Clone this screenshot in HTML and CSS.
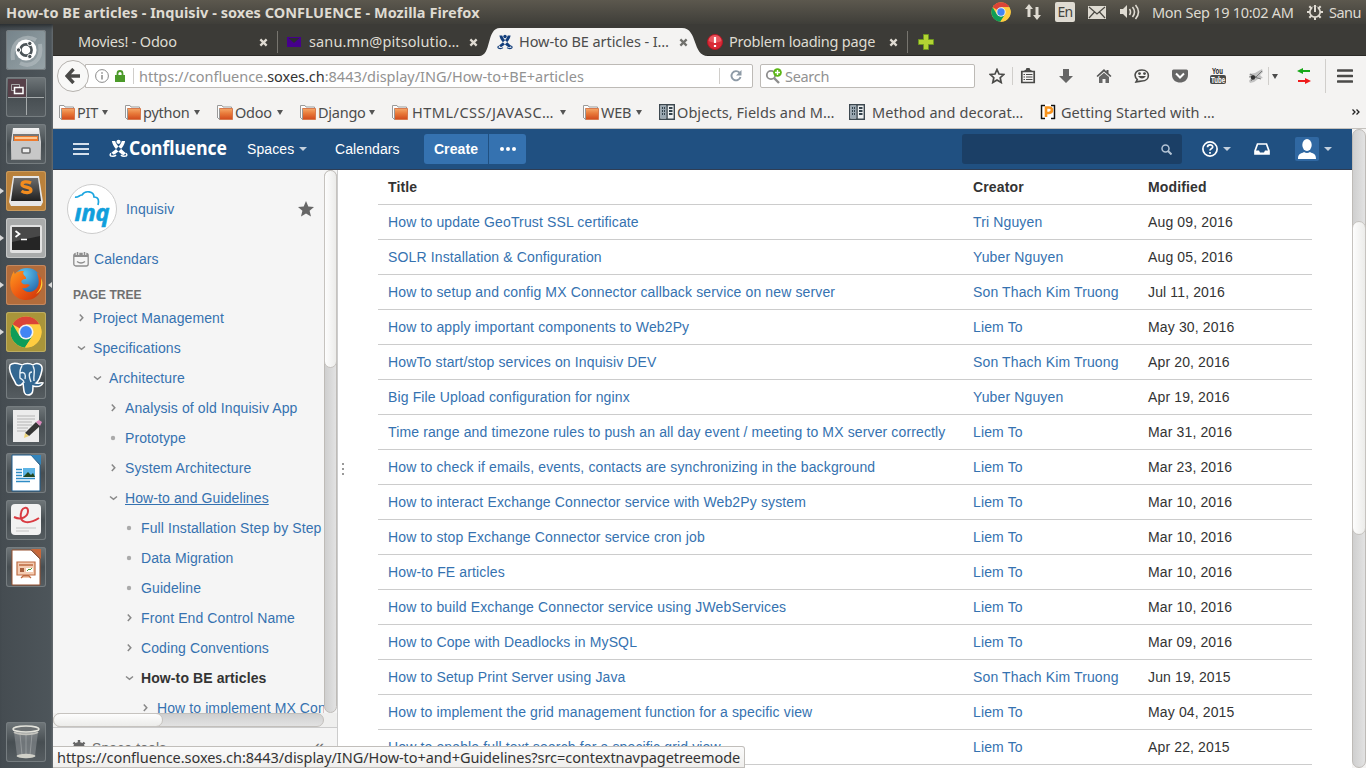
FILE: index.html
```html
<!DOCTYPE html>
<html lang="en">
<head>
<meta charset="utf-8">
<title>How-to BE articles - Inquisiv - soxes CONFLUENCE</title>
<link rel="stylesheet" href="styles.css">
</head>
<body>
<svg class="defs" width="0" height="0" aria-hidden="true">
  <defs>
    <linearGradient id="orange" x1="0" y1="0" x2="0" y2="1"><stop offset="0" stop-color="#f6a868"/><stop offset=".45" stop-color="#e87a3a"/><stop offset="1" stop-color="#d24a1c"/></linearGradient>
    <linearGradient id="steel" x1="0" y1="0" x2="0" y2="1"><stop offset="0" stop-color="#f3f3f3"/><stop offset="1" stop-color="#a9a9a9"/></linearGradient>
    <linearGradient id="fox" x1="0" y1="0" x2="1" y2="1"><stop offset="0" stop-color="#ff9a1f"/><stop offset=".5" stop-color="#ee5a12"/><stop offset="1" stop-color="#c8320a"/></linearGradient>
    <radialGradient id="globe" cx=".4" cy=".2" r=".9"><stop offset="0" stop-color="#5cc4f0"/><stop offset="1" stop-color="#174a92"/></radialGradient>
    <linearGradient id="dark" x1="0" y1="0" x2="0" y2="1"><stop offset="0" stop-color="#6c6c6c"/><stop offset="1" stop-color="#202020"/></linearGradient>
    <symbol id="folder" viewBox="0 0 16 15"><path d="M.5 13V.5H5L6 2h8.500v3" fill="#fdfdfd" stroke="#9a9a9a"/><path d="M2.500 3.500h13v11h-13z" fill="url(#orange)" stroke="#d77a4e"/><path d="M.5 12.500l2 2V4" fill="none" stroke="#999"/></symbol>
    <symbol id="chrome" viewBox="0 0 32 32"><circle cx="16" cy="16" r="15.500" fill="#ffcd40"/><path d="M16 16 2.600 8.200A15.500 15.500 0 0 1 29.500 8.500H16z" fill="#db4437"/><path d="M2.600 8.200A15.500 15.500 0 0 0 15 31.500L22.500 20 16 16 9.500 19.800z" fill="#0f9d58"/><path d="M15 31.500 22.500 20 23 12 16 8.500H29.500A15.500 15.500 0 0 1 15 31.500z" fill="#ffcd40"/><circle cx="16" cy="16" r="7.500" fill="#f1f1f1"/><circle cx="16" cy="16" r="5.900" fill="#4285f4"/></symbol>
    <symbol id="x" viewBox="0 0 10 10"><path d="M1.500 1.500l7 7M8.500 1.500l-7 7" stroke="currentColor" stroke-width="2.500"/></symbol>
    <symbol id="caret" viewBox="0 0 8 5" preserveAspectRatio="none"><path d="M0 0h8L4 5z" fill="currentColor"/></symbol>
    <symbol id="mark" viewBox="0 0 20 20"><path d="M3 2h3.500c1.500 5 6 8 11.500 13l-3 2C9 13 4 8 3 2zM17 2h-3.500C12 7 8 10 2.500 14.500l2.500 2C11 13 16 8 17 2z" fill="currentColor"/><circle cx="10" cy="3" r="2.200" fill="currentColor"/><path d="M2 15c-3 3.500 3 4 5.500 2M18 15c3 3.500-3 4-5.500 2" fill="none" stroke="currentColor" stroke-width="1.500"/></symbol>
    <symbol id="book" viewBox="0 0 16 16"><path d="M.7.700h14.600v14.600H.7z" fill="#eef0f1" stroke="#3d4850" stroke-width="1.400"/><path d="M1.400 1.400H7v13.200H1.400z" fill="#9aa7b1"/><path d="M8 1v14" stroke="#3d4850" stroke-width="1.500"/><path d="M3 4h1M5 4h1M3 7h1M5 7h1M3 10h1M5 10h1M10 4h3.500M10 7h3.500M10 10h3.500" stroke="#33424c" stroke-width="1.800"/></symbol>
    <symbol id="right" viewBox="0 0 10 10"><path d="M3.800 1.500 6.800 4.700 3.800 8" fill="none" stroke="#888" stroke-width="1.500"/></symbol>
    <symbol id="down" viewBox="0 0 10 10"><path d="M2 3.500 5.500 6.300 9 3.500" fill="none" stroke="#888" stroke-width="1.500"/></symbol>
    <symbol id="dot" viewBox="0 0 10 10"><circle cx="5" cy="5" r="2.200" fill="#aaa"/></symbol>
  </defs>
</svg>

<header class="panel">
  <span class="window-title">How-to BE articles - Inquisiv - soxes CONFLUENCE - Mozilla Firefox</span>
  <div class="indicators">
    <svg class="i-chrome"><use href="#chrome"/></svg>
    <svg class="i-net" viewBox="0 0 18 18"><path d="M5 1 9 6H6.500v8h-3V6H1zM13 17l-4-5h2.500V4h3v8H17z" fill="#dfdbd2"/></svg>
    <span class="lang">En</span>
    <svg class="i-mail" viewBox="0 0 18 13"><path d="M0 0h18v13H0z" fill="#dfdbd2"/><path d="M1 1l8 7 8-7M1 12l5.500-6M17 12l-5.500-6" fill="none" stroke="#4a4842" stroke-width="1.200"/></svg>
    <svg class="i-sound" viewBox="0 0 20 18"><path d="M0 6h3l4-4v13l-4-4H0z" fill="#dfdbd2"/><path d="M9.500 6q2 3 0 6M12.500 4q4 5 0 10M15.500 2q6 7 0 14" fill="none" stroke="#dfdbd2" stroke-width="1.600"/></svg>
    <span class="clock">Mon Sep 19 10:02 AM</span>
    <svg class="i-gear" viewBox="0 0 18 18"><circle cx="9" cy="9" r="5.200" fill="none" stroke="#dfdbd2" stroke-width="1.700"/><path d="M9 3.500V9" stroke="#45433e" stroke-width="5"/><path d="M9 2v7M1 9h3M14 9h3M3.300 3.300l2 2M14.700 3.300l-2 2M3.300 14.700l2-2M14.700 14.700l-2-2M9 14.500V17" stroke="#dfdbd2" stroke-width="2"/></svg>
    <span class="user">Sanu</span>
  </div>
</header>

<div class="desktop">
  <nav class="launcher">
    <div class="tile ubuntu"><svg viewBox="0 0 40 40"><path d="M7 30C4 10 20 4 30 10M34 14c3 18-10 24-20 19" fill="none" stroke="#b5bec1" stroke-width="4" opacity=".6"/><circle cx="20" cy="20" r="10.500" fill="#fff"/><circle cx="20" cy="20" r="5.600" fill="none" stroke="#4b5357" stroke-width="2.600"/><g fill="#4b5357" stroke="#fff"><circle cx="12.500" cy="20" r="2.200"/><circle cx="23.800" cy="13.500" r="2.200"/><circle cx="23.800" cy="26.500" r="2.200"/></g></svg></div>
    <div class="tile"><svg viewBox="0 0 40 40"><path d="M2 2h18v18H2z" fill="#574049"/><path d="M20.500 2v36M2 20.500h36" stroke="#a6abac"/><path d="M5.500 7.500h8v6h-8z" fill="none" stroke="#aaa"/><path d="M8.500 10.500h8.500v6H8.500z" fill="#574049" stroke="#fff" stroke-width="1.500"/></svg></div>
    <div class="tile"><svg viewBox="0 0 40 40"><path d="M7 4h26l2 14v18H5V18z" fill="url(#steel)"/><path d="M7 10h26v7H7z" fill="#777"/><path d="M8 12h24v5H8z" fill="#ef7b2d"/><path d="M9 14h22" stroke="#ffe0b5" stroke-width="1.500"/><path d="M6 17h28v18H6z" fill="#c8c8c8"/><rect x="16" y="24" width="8" height="5" rx="1" fill="#eee" stroke="#6b6b6b" stroke-width="1.600"/></svg></div>
    <div class="tile amber run"><svg viewBox="0 0 40 40"><path d="M7 5h26l4 26-2 4H5l-2-4z" fill="#e7e7e7"/><path d="M8 7h24l3 23H5z" fill="url(#dark)"/><path d="M25 12c-4-2-9-1.500-9 1.500 0 3.500 9 1.800 9 5.500 0 3.200-6 3.300-9.500 1" fill="none" stroke="#f28c1e" stroke-width="3.200"/></svg></div>
    <div class="tile light run"><svg viewBox="0 0 40 40"><rect x="4" y="7" width="32" height="28" rx="2" fill="#e2e2e2"/><path d="M6 9h28v23H6z" fill="#252525"/><path d="M6 9h28v9L6 24z" fill="#484848"/><path d="M9.500 13l4 3-4 3M15 21.500h6" fill="none" stroke="#fff" stroke-width="1.700"/></svg></div>
    <div class="tile rust run active"><svg viewBox="0 0 40 40"><circle cx="21" cy="18" r="15" fill="url(#globe)"/><path d="M8 6C2 15 3 28 12 33s23 1 24-13c1-6-3-12-5-12 2 5 3 12-1 16-5 5-12 3-14-1 4 1 6-1 8-3-3-2-5 1-8-2-2-2 1-4 4-4 1-3-5-4-2-8-4 0-7 0-9 3-1-1-1-2-1-3z" fill="url(#fox)"/><path d="M35 13c1 7-1 12-5 16 6-3 8-10 5-16z" fill="#ffd435"/></svg></div>
    <div class="tile gold run"><svg viewBox="0 0 40 40"><use href="#chrome" x="4" y="4" width="32" height="32"/></svg></div>
    <div class="tile"><svg viewBox="0 0 40 40"><path d="M4 6c4-4 9-1 12 0 3-2 8-2 11 0 4-3 10-1 9 5-1 5-3 11-6 13 3 1 5-1 7 0-2 4-6 4-10 3 0 5 0 9-5 9s-4-6-5-12c-3 4-7 3-8-1C6 18 2 11 4 6z" fill="#336791" stroke="#fff" stroke-width="1.500"/><path d="M16 7c-3 4-2 8-2 12 2 2 4 1 4 5M27 7c3 5 0 9 1 15M14 14c5-2 6 2 5 6M26 13c-4 0-3 5-1 10" fill="none" stroke="#e8f1f7" stroke-width="1.400"/></svg></div>
    <div class="tile"><svg viewBox="0 0 40 40"><path d="M7 4h26v32H7z" fill="#ececec"/><path d="M11 10h18M11 13h18M11 16h15M11 19h15M11 22h11M11 25h9" stroke="#b4b4b4"/><path d="M19 27 30 16l4 4-11 10z" fill="#353535"/><path d="M30 16l3-2 3 2-2 4z" fill="#dc89bd"/><path d="M19 27l4 3-5 2z" fill="#ead276"/></svg></div>
    <div class="tile"><svg viewBox="0 0 40 40"><path d="M6 2h19l9 10v26H6z" fill="#fff" stroke="#1c5c8e"/><path d="M25 2h10v10z" fill="#3485bb"/><path d="M10 16.500h6M10 19.500h6M10 22.500h6M10 25.500h19M10 28.500h14" stroke="#2f8cc5" stroke-width="1.700"/><path d="M17 15h12v9H17z" fill="#5db4e5"/><path d="M17 24l5-5 3 3 2-2 2 4z" fill="#244821"/></svg></div>
    <div class="tile"><svg viewBox="0 0 40 40"><rect x="5" y="4" width="30" height="31" rx="4" fill="#f2f2f2"/><path d="M8 17c8 4 14-1 14-6 0-5-6-4-7 2-2 10 7 12 18 5" fill="none" stroke="#d93b42" stroke-width="2"/><path d="M10 28h20M10 31h13" stroke="#c4c4c4"/></svg></div>
    <div class="tile"><svg viewBox="0 0 40 40"><path d="M6 3h19l9 9v26H6z" fill="#fff" stroke="#97502f"/><path d="M25 2h10v10z" fill="#c9683a"/><path d="M11 15h18v13H11zM15 31l2-2h6l2 2" fill="#f4ccb2" stroke="#bd6a40" stroke-width="1.200"/><path d="M13 18h14" stroke="#bd6a40" stroke-width="1.500"/><path d="M14 21h4v4h-4z" fill="#a7603f"/><path d="M20 21h7v4h-7z" fill="#fff"/><path d="M21 24l2-2 1 1 2-2" fill="none" stroke="#4a9b3a"/></svg></div>
    <div class="tile trash"><svg viewBox="0 0 40 40"><path d="M8 10l3 24c1 3 17 3 18 0l3-24z" fill="#b9bebf" opacity=".35"/><path d="M14 12l2 21M20 12v22M26 12l-2 21" stroke="#c8caca" stroke-width=".4"/><ellipse cx="20" cy="7" rx="13" ry="3" fill="#6d7274" stroke="#e4e4dc" stroke-width="1.600"/><path d="M8 10c4 3 20 3 24 0" fill="none" stroke="#c3c3bd" stroke-width="2"/><ellipse cx="20" cy="34" rx="9.500" ry="2.200" fill="#d0d0c8"/></svg></div>
  </nav>

  <main class="browser">
    <div class="tabs">
      <div class="tab t1"><span>Movies! - Odoo</span><svg class="close"><use href="#x"/></svg></div>
      <div class="tab t2"><svg class="fav-mail" viewBox="0 0 14 10"><path d="M0 0h14v10H0z" fill="#46008c"/><path d="M1.500 1 7 6l5.500-5" fill="#2c2c30"/></svg><span>sanu.mn@pitsolutio…</span><svg class="close"><use href="#x"/></svg></div>
      <div class="tab t3">
        <svg class="tab-shape" viewBox="0 0 230 28"><path d="M0 28C13 28 7 0 21 0H203C219 0 213 28 229 28z" fill="#f4f3f2"/></svg>
        <svg class="fav"><use href="#mark"/></svg><span>How-to BE articles - I…</span><svg class="close"><use href="#x"/></svg></div>
      <div class="tab t4"><svg class="fav" viewBox="0 0 16 16"><circle cx="8" cy="8" r="7.500" fill="#d92b38" stroke="#b51724"/><path d="M1.500 7a6.500 6 0 0 1 13 0q-6 3-13 0z" fill="#ee6b71" opacity=".7"/><path d="M8 3v6M8 11v2" stroke="#fff" stroke-width="2.200"/></svg><span>Problem loading page</span><svg class="close"><use href="#x"/></svg></div>
      <svg class="plus" viewBox="0 0 16 16"><path d="M5.500.5h5v5h5v5h-5v5h-5v-5h-5v-5h5z" fill="#b4d433" stroke="#6e9620"/></svg>
    </div>

    <div class="navbar">
      <div class="back"><svg viewBox="0 0 16 16"><path d="M8.500 1 2 8l6.500 7M2.500 8H15" fill="none" stroke="#4a4a48" stroke-width="3.400"/></svg></div>
      <div class="url">
        <svg class="info" viewBox="0 0 14 14"><circle cx="7" cy="7" r="6.400" fill="none" stroke="#8a8a8a"/><path d="M7 6v4.500M7 3.200v1.600" stroke="#8a8a8a" stroke-width="1.500"/></svg>
        <svg class="lock" viewBox="0 0 10 12"><path d="M2.500 6V3.500a2.500 2.500 0 0 1 5 0V6" fill="none" stroke="#4c9a2a" stroke-width="1.800"/><path d="M0 5h10v7H0z" fill="#4c9a2a"/></svg>
        <i class="rule"></i>
        <span class="address">https://confluence.<b>soxes.ch</b>:8443/display/ING/How-to+BE+articles</span>
        <i class="rule end"></i>
        <svg class="reload" viewBox="0 0 12 12"><path d="M9.500 2.700A4.600 4.600 0 1 0 10.500 7" fill="none" stroke="#8d9aa6" stroke-width="1.900"/><path d="M11.500 0v5.500H6z" fill="#8d9aa6"/></svg>
      </div>
      <div class="search"><svg viewBox="0 0 18 16"><circle cx="6" cy="7" r="4.200" fill="none" stroke="#8e8e8e" stroke-width="1.800"/><path d="M9 10l5 5" stroke="#8e8e8e" stroke-width="2.400"/><circle cx="12.500" cy="4.500" r="4.300" fill="#5cb615"/><path d="M10 4.500h5M12.500 2v5" stroke="#fff" stroke-width="1.400"/></svg><span>Search</span></div>
      <div class="tools">
        <svg class="w16" viewBox="0 0 16 16"><path d="M8 1.500l2 4.500 4.800.5-3.600 3.200 1 4.800L8 12l-4.200 2.500 1-4.800L1.200 6.500 6 6z" fill="none" stroke="#4a4a48" stroke-width="1.700"/></svg>
        <i class="rule"></i>
        <svg class="w16 clip" viewBox="0 0 16 16"><path d="M1.800 3.500h12.400v11H1.800z" fill="#f4f3f2" stroke="#4a4a48" stroke-width="1.700"/><path d="M3 3.500 6 1.500a2 2 0 0 1 4 0l3 2z" fill="#4a4a48"/><path d="M3.500 6.500h1.500M6 6.500h6.500M3.500 9h1.500M6 9h6.500M3.500 11.500h1.500M6 11.500h6.500" stroke="#4a4a48" stroke-width="1.100"/></svg>
        <svg class="w16 g1" viewBox="0 0 16 16"><path d="M5 1h6v7h4l-7 7-7-7h4z" fill="#666"/></svg>
        <svg class="w16 g2" viewBox="0 0 16 16"><path d="M8 1 .5 8l1.200 1L8 3.500 14.300 9l1.200-1-3-2.800V2h-2v1.500z" fill="#555"/><path d="M3 9l5-4.200L13 9v6H9.500v-4h-3v4H3z" fill="#666"/></svg>
        <svg class="w16 g3" viewBox="0 0 16 16"><path d="M8 2c8.500 0 8.500 11 0 11-2 0-2.500.5-6 1l1.300-2.500C-.5 8 .5 2 8 2z" fill="none" stroke="#4a4a48" stroke-width="1.600"/><path d="M4 8q4 5 8 0z" fill="#4a4a48"/><circle cx="5.500" cy="5.600" r="1.400" fill="#4a4a48"/><circle cx="10.500" cy="5.600" r="1.400" fill="#4a4a48"/></svg>
        <svg class="w16 g4" viewBox="0 0 16 16"><path d="M1.500 1.500h13q1.500 0 1.500 1.500v4c0 10-16 10-16 0V3q0-1.500 1.500-1.500z" fill="#666"/><path d="M4 5.500l4 4 4-4" fill="none" stroke="#fff" stroke-width="2"/></svg>
        <svg class="w16 g5" viewBox="0 0 16 18"><rect y="8" width="16" height="9" rx="2" fill="#4a4a48"/><text x="2" y="7" textLength="11" lengthAdjust="spacingAndGlyphs" class="yt">You</text><text x="1" y="15.500" textLength="14" lengthAdjust="spacingAndGlyphs" class="yt inv">Tube</text></svg>
        <svg class="w16 g6" viewBox="0 0 16 16"><path d="M1 6l6-1 7-4 1 3-3 3 3 3-5 1-4 3-4 1-1-2 2-3z" fill="#c2c2c2"/><path d="M2 6l6 3 6-6M3 13l3-4 7 2M1 9l5-1" fill="none" stroke="#777"/><circle cx="5" cy="9.500" r="2.200" fill="#333"/></svg>
        <i class="rule"></i>
        <svg class="tri"><use href="#caret"/></svg>
        <svg class="w14 g7" viewBox="0 0 14 16"><path d="M5 3h8" stroke="#18a818" stroke-width="2"/><path d="M6 0v6L0 3z" fill="#18a818"/><path d="M1 13h8" stroke="#ee1c1c" stroke-width="2"/><path d="M8 10v6l6-3z" fill="#ee1c1c"/></svg>
        <i class="rule tall"></i>
        <svg class="w16 g8" viewBox="0 0 16 14"><path d="M1 1.500h14M1 7h14M1 12.500h14" stroke="#4a4a48" stroke-width="2.600" stroke-linecap="round"/></svg>
      </div>
    </div>

    <div class="bookmarks">
      <div class="bm b1"><svg><use href="#folder"/></svg><span>PIT</span><svg class="tri"><use href="#caret"/></svg></div>
      <div class="bm b2"><svg><use href="#folder"/></svg><span>python</span><svg class="tri"><use href="#caret"/></svg></div>
      <div class="bm b3"><svg><use href="#folder"/></svg><span>Odoo</span><svg class="tri"><use href="#caret"/></svg></div>
      <div class="bm b4"><svg><use href="#folder"/></svg><span>Django</span><svg class="tri"><use href="#caret"/></svg></div>
      <div class="bm b5"><svg><use href="#folder"/></svg><span>HTML/CSS/JAVASC…</span><svg class="tri"><use href="#caret"/></svg></div>
      <div class="bm b6"><svg><use href="#folder"/></svg><span>WEB</span><svg class="tri"><use href="#caret"/></svg></div>
      <div class="bm b7"><svg><use href="#book"/></svg><span>Objects, Fields and M…</span></div>
      <div class="bm b8"><svg><use href="#book"/></svg><span>Method and decorat…</span></div>
      <div class="bm b9"><svg viewBox="0 0 16 16"><path d="M0 0h16v16H0z" fill="#fff"/><path d="M5 1.500H1.500v13H5M11 1.500h3.500v13H11" fill="none" stroke="#111" stroke-width="1.500"/><path d="M6 13V3.500h3q3 0 3 2.600T9 9H6" fill="none" stroke="#f7931e" stroke-width="2.600"/></svg><span>Getting Started with …</span></div>
      <svg class="more" viewBox="0 0 8 6"><path d="M.5.500 3 3 .5 5.500M4.500.500 7 3 4.500 5.500" fill="none" stroke="#222" stroke-width="1.300"/></svg>
    </div>

    <div class="viewport">
      <div class="page">
        <header class="conf">
          <svg class="burger" viewBox="0 0 16 12"><path d="M0 1h16M0 6h16M0 11h16" stroke="#d5e0ec" stroke-width="2"/></svg>
          <svg class="logo" viewBox="0 0 120 24"><use href="#mark" x="1" y="2" width="19" height="19"/><text x="21" y="18" textLength="98" lengthAdjust="spacingAndGlyphs">Confluence</text></svg>
          <span class="spaces">Spaces</span><svg class="tri sp"><use href="#caret"/></svg>
          <span class="cal">Calendars</span>
          <b class="create">Create</b><span class="dots"><svg viewBox="0 0 16 4"><circle cx="2" cy="2" r="2"/><circle cx="8" cy="2" r="2"/><circle cx="14" cy="2" r="2"/></svg></span>
          <div class="right">
            <div class="quick"><svg viewBox="0 0 11 11"><circle cx="4.500" cy="4.500" r="3.500" fill="none" stroke="#b4c4d5" stroke-width="1.500"/><path d="M7 7l3.500 3.500" stroke="#b4c4d5" stroke-width="2"/></svg></div>
            <svg class="help" viewBox="0 0 16 16"><circle cx="8" cy="8" r="7.100" fill="none" stroke="#fff" stroke-width="1.700"/><path d="M5.500 6.200c0-3.200 5.200-3 5.200-.3C10.700 7.700 8 7.600 8 9.600M8 11v1.800" fill="none" stroke="#fff" stroke-width="1.700"/></svg>
            <svg class="tri"><use href="#caret"/></svg>
            <svg class="tray" viewBox="0 0 16 12"><path d="M3.500 1h9L15 8v3H1V8z" fill="none" stroke="#fff" stroke-width="1.700"/><path d="M1 7.500h4l1 2h4l1-2h4V11H1z" fill="#fff"/></svg>
            <svg class="avatar" viewBox="0 0 24 24"><rect width="24" height="24" rx="2" fill="#3068a2"/><ellipse cx="12" cy="8" rx="4.700" ry="6" fill="#fff"/><path d="M3 22c0-6 3-5 6-7q3 2 6 0c3 2 6 1 6 7z" fill="#fff"/></svg>
            <svg class="tri"><use href="#caret"/></svg>
          </div>
        </header>
        <div class="body">
          <aside class="side">
            <div class="scroller">
              <div class="side-content">
                <div class="space"><svg class="inq" viewBox="0 0 50 50"><circle cx="25" cy="25" r="24.500" fill="#fff" stroke="#ccc"/><path d="M8 13c3 1 4-2 7-2 3-5 12-4 12 2 5 0 5 4 4 8" fill="none" stroke="#1ba5e0" stroke-width="1.700"/><text x="7.500" y="37" textLength="35" lengthAdjust="spacingAndGlyphs">ınq</text></svg><a>Inquisiv</a><svg class="star" viewBox="0 0 16 16"><path d="M8 0l2.300 5.500L16 6l-4.400 3.700L13 15.500 8 12.400l-5 3.100 1.400-5.800L0 6l5.700-.5z" fill="#666"/></svg></div>
                <div class="calrow"><svg viewBox="0 0 16 16"><rect x=".8" y="2.500" width="14.400" height="12.500" rx="2" fill="none" stroke="#8d8d8d" stroke-width="1.300"/><path d="M1 3h14v3H1z" fill="#8d8d8d"/><path d="M4.500 0v4M11.500 0v4" stroke="#f5f5f5" stroke-width="3.500"/><path d="M4.500 1v3M11.500 1v3" stroke="#8d8d8d" stroke-width="1.500"/><path d="M4 10.500q4 3 8 0" fill="none" stroke="#8d8d8d" stroke-width="1.300"/></svg><a>Calendars</a></div>
                <h5>PAGE TREE</h5>
                <ul class="tree">
                  <li class="l1"><svg><use href="#right"/></svg><a>Project Management</a></li>
                  <li class="l1"><svg><use href="#down"/></svg><a>Specifications</a></li>
                  <li class="l2"><svg><use href="#down"/></svg><a>Architecture</a></li>
                  <li class="l3"><svg><use href="#right"/></svg><a>Analysis of old Inquisiv App</a></li>
                  <li class="l3"><svg><use href="#dot"/></svg><a>Prototype</a></li>
                  <li class="l3"><svg><use href="#right"/></svg><a>System Architecture</a></li>
                  <li class="l3"><svg><use href="#down"/></svg><a class="hover">How-to and Guidelines</a></li>
                  <li class="l4"><svg><use href="#dot"/></svg><a>Full Installation Step by Step</a></li>
                  <li class="l4"><svg><use href="#dot"/></svg><a>Data Migration</a></li>
                  <li class="l4"><svg><use href="#dot"/></svg><a>Guideline</a></li>
                  <li class="l4"><svg><use href="#right"/></svg><a>Front End Control Name</a></li>
                  <li class="l4"><svg><use href="#right"/></svg><a>Coding Conventions</a></li>
                  <li class="l4"><svg><use href="#down"/></svg><a class="current">How-to BE articles</a></li>
                  <li class="l5"><svg><use href="#right"/></svg><a>How to implement MX Connector</a></li>
                </ul>
              </div>
              <div class="vbar"><i></i></div>
            </div>
            <div class="hbar"><div><i></i></div></div>
            <div class="space-tools"><svg viewBox="0 0 16 16"><circle cx="8" cy="8" r="4.200" fill="none" stroke="#666" stroke-width="3.500"/><path d="M8 0v16M0 8h16M2.500 2.500l11 11M13.500 2.500l-11 11" stroke="#666" stroke-width="2.400"/><circle cx="8" cy="8" r="2" fill="#f5f5f5"/></svg><span>Space tools</span><em>«</em></div>
          </aside>
          <div class="grip"><i></i><i></i><i></i></div>
          <section class="content">
            <table>
              <thead><tr><th class="c1">Title</th><th class="c2">Creator</th><th>Modified</th></tr></thead>
              <tbody>
                <tr><td><a>How to update GeoTrust SSL certificate</a></td><td><a>Tri Nguyen</a></td><td>Aug 09, 2016</td></tr>
                <tr><td><a>SOLR Installation &amp; Configuration</a></td><td><a>Yuber Nguyen</a></td><td>Aug 05, 2016</td></tr>
                <tr><td><a>How to setup and config MX Connector callback service on new server</a></td><td><a>Son Thach Kim Truong</a></td><td>Jul 11, 2016</td></tr>
                <tr><td><a>How to apply important components to Web2Py</a></td><td><a>Liem To</a></td><td>May 30, 2016</td></tr>
                <tr><td><a>HowTo start/stop services on Inquisiv DEV</a></td><td><a>Son Thach Kim Truong</a></td><td>Apr 20, 2016</td></tr>
                <tr><td><a>Big File Upload configuration for nginx</a></td><td><a>Yuber Nguyen</a></td><td>Apr 19, 2016</td></tr>
                <tr><td><a>Time range and timezone rules to push an all day event / meeting to MX server correctly</a></td><td><a>Liem To</a></td><td>Mar 31, 2016</td></tr>
                <tr><td><a>How to check if emails, events, contacts are synchronizing in the background</a></td><td><a>Liem To</a></td><td>Mar 23, 2016</td></tr>
                <tr><td><a>How to interact Exchange Connector service with Web2Py system</a></td><td><a>Liem To</a></td><td>Mar 10, 2016</td></tr>
                <tr><td><a>How to stop Exchange Connector service cron job</a></td><td><a>Liem To</a></td><td>Mar 10, 2016</td></tr>
                <tr><td><a>How-to FE articles</a></td><td><a>Liem To</a></td><td>Mar 10, 2016</td></tr>
                <tr><td><a>How to build Exchange Connector service using JWebServices</a></td><td><a>Liem To</a></td><td>Mar 10, 2016</td></tr>
                <tr><td><a>How to Cope with Deadlocks in MySQL</a></td><td><a>Liem To</a></td><td>Mar 09, 2016</td></tr>
                <tr><td><a>How to Setup Print Server using Java</a></td><td><a>Son Thach Kim Truong</a></td><td>Jun 19, 2015</td></tr>
                <tr><td><a>How to implement the grid management function for a specific view</a></td><td><a>Liem To</a></td><td>May 04, 2015</td></tr>
                <tr><td><a>How to enable full text search for a specific grid view</a></td><td><a>Liem To</a></td><td>Apr 22, 2015</td></tr>
              </tbody>
            </table>
          </section>
        </div>
      </div>
      <div class="vbar page-bar"><i></i></div>
      <div class="status"><span>https://confluence.soxes.ch:8443/display/ING/How-to+and+Guidelines?src=contextnavpagetreemode</span></div>
    </div>
  </main>
</div>
</body>
</html>
```
FILE: styles.css
```css
* { box-sizing: border-box; }
body { margin: 0; width: 1366px; height: 768px; overflow: hidden; font: 14.5px/20px "Noto Sans", "Open Sans", sans-serif; color: #4c4c4c; }
.defs { position: absolute; }
svg { display: block; flex: none; }
span, a, b { white-space: nowrap; }

/* top panel */
.panel { height: 24px; display: flex; justify-content: space-between; align-items: center; padding: 0 0 0 6px; color: #dfdbd2; background: linear-gradient(#5c584e, #3f3e39); }
.window-title { font-weight: 700; font-size: 14.5px; letter-spacing: .04px; }
.indicators { display: flex; align-items: center; width: 375px; }
.i-chrome { width: 20px; height: 20px; }
.i-net { width: 18px; height: 18px; margin-left: 13px; }
.lang { width: 20px; height: 20px; margin-left: 13px; border-radius: 2px; background: #dfdbd2; color: #45433e; font-size: 14px; text-align: center; letter-spacing: -.6px; }
.i-mail { width: 18px; height: 13px; margin-left: 13px; }
.i-sound { width: 20px; height: 18px; margin-left: 14px; }
.clock { width: 142px; margin-left: 12px; letter-spacing: -.29px; }
.i-gear { width: 18px; height: 18px; margin-left: 12px; }
.user { margin-left: 5px; letter-spacing: -.5px; }

/* launcher */
.desktop { display: flex; height: 744px; }
.launcher { width: 53px; padding: 6px 7px 6px 6px; display: flex; flex-direction: column; gap: 7px; background: linear-gradient(90deg, #454c51, #4d555a 96%, #6a7074); box-shadow: inset 0 6px 5px -4px #25292b; }
.tile { width: 40px; height: 40px; flex: none; border-radius: 3px; position: relative; background: linear-gradient(#70777a, #474e52 50%, #565d61); box-shadow: inset 0 0 0 1px #767d80; }
.tile svg { width: 40px; height: 40px; }
.ubuntu { background: linear-gradient(135deg, #75838a, #98a4a8); }
.amber { background: #b9813b; box-shadow: inset 0 0 0 1px #c99a5d; }
.light { background: #a9abab; box-shadow: inset 0 0 0 1px #c4c6c6; }
.rust { background: #b26c3b; box-shadow: inset 0 0 0 1px #c48960; }
.gold { background: #a9953a; box-shadow: inset 0 0 0 1px #bdad62; }
.trash { margin-top: auto; }
.run::before { content: ""; position: absolute; left: -6px; top: 17px; border: 3px solid transparent; border-left: 4px solid #d8d8d8; border-right: 0; }
.active::after { content: ""; position: absolute; right: -6px; top: 17px; border: 3px solid transparent; border-right: 4px solid #d8d8d8; border-left: 0; }

/* browser chrome */
.browser { width: 1313px; display: flex; flex-direction: column; background: #f4f3f2; }
.tabs { height: 32px; flex: none; display: flex; align-items: flex-start; background: #3c3b37; border-bottom: 1px solid #2b2a27; color: #dfdbd2; }
.tab { height: 32px; padding-top: 4px; display: flex; align-items: center; position: relative; }
.tab span { flex: 1; letter-spacing: -.22px; position: relative; top: -1px; }
.close { width: 9px; height: 9px; color: #dfdbd2; position: relative; }
.fav, .plus { width: 16px; height: 16px; position: relative; }
.t1 { width: 225px; padding-left: 25px; padding-right: 10px; }
.t1::after, .t4::after { content: ""; position: absolute; right: 0; top: 7px; width: 1px; height: 22px; background: #77756f; }
.t2 { width: 210px; padding-left: 9px; padding-right: 10px; gap: 8px; }
.t2 span { letter-spacing: .12px; }
.fav-mail { width: 14px; height: 10px; }
.t3 { width: 210px; padding-left: 9px; padding-right: 10px; gap: 6px; color: #4c4c4c; }
.t3 span { letter-spacing: -.08px; }
.t3 .fav { color: #123e7c; }
.t3 .close { color: #70706c; }
.tab-shape { position: absolute; left: -9px; top: 4px; width: 230px; height: 28px; }
.t4 { width: 210px; padding-left: 9px; padding-right: 10px; gap: 6px; }
.plus { margin: 10px 0 0 10px; }

.navbar { height: 40px; flex: none; display: flex; align-items: center; padding-left: 4px; }
.back { width: 32px; height: 32px; border: 1px solid #b5b2ae; border-radius: 50%; background: #f8f8f7; display: grid; place-items: center; z-index: 1; }
.back svg { width: 16px; height: 16px; }
.url { width: 668px; height: 24px; margin-left: -4px; border: 1px solid #bdbab6; border-radius: 0 2px 2px 0; background: #fff; display: flex; align-items: center; padding-left: 9px; color: #929292; }
.info { width: 14px; height: 14px; }
.lock { width: 10px; height: 12px; margin-left: 6px; }
.rule { width: 1px; height: 18px; background: #d0cecb; flex: none; }
.url .rule { height: 16px; margin-left: 8px; }
.address { margin-left: 5px; flex: 1; letter-spacing: -.02px; }
.address b { font-weight: 400; color: #333; }
.reload { width: 12px; height: 12px; margin: 0 10px; }
.search { width: 215px; height: 24px; margin-left: 7px; border: 1px solid #bdbab6; border-radius: 2px; background: #fff; display: flex; align-items: center; gap: 2px; padding-left: 4px; color: #929292; }
.search svg { width: 18px; height: 16px; }
.search span { letter-spacing: -.3px; }
.tools { display: flex; align-items: center; margin-left: 14px; }
.w16 { width: 16px; height: 16px; }
.tools .clip { margin-left: 7px; }
.tools .rule { margin-left: 7px; }
.g1, .g2, .g3, .g4, .g5, .g6 { margin-left: 22px; }
.g5 { height: 18px; }
.yt { font: 700 9px "Liberation Sans", sans-serif; fill: #222; }
.inv { fill: #fff; }
.tools .g6 + .rule { margin-left: 4px; }
.tools .tri { width: 6px; height: 5px; margin-left: 3px; }
.g7 { width: 14px; height: 16px; margin-left: 19px; }
.tools .tall { height: 34px; margin-left: 14px; }
.g8 { height: 14px; margin-left: 11px; }

.bookmarks { height: 33px; flex: none; display: flex; align-items: center; padding-left: 6px; border-bottom: 1px solid #c4c1bd; }
.bm { display: flex; align-items: center; gap: 2px; }
.bm > svg { width: 16px; height: 15px; }
.bm > .tri { width: 6px; height: 5px; color: #555; margin-left: auto; }
.bm span { letter-spacing: -.25px; }
.b1 { width: 49px; } .b2 { width: 75px; margin-left: 17px; } .b3 { width: 66px; margin-left: 17px; } .b4 { width: 75px; margin-left: 17px; }
.b5 { width: 174px; margin-left: 17px; gap: 4px; } .b6 { width: 59px; margin-left: 17px; }
.b7 { width: 190px; margin-left: 17px; } .b8 { width: 191px; gap: 7px; } .b9 { gap: 5px; }
.bm.b5 span { letter-spacing: .5px; }
.bm.b7 span, .bm.b8 span, .bm.b9 span { letter-spacing: .06px; }
.b7 > svg, .b8 > svg, .b9 > svg { height: 16px; }
.more { width: 8px; height: 6px; margin: 0 6px 0 auto; }

/* page */
.viewport { height: 639px; display: flex; position: relative; font-family: "Liberation Sans", Arial, sans-serif; font-size: 14px; }
.page { width: 1299px; background: #fff; color: #333; letter-spacing: .1px; }
.page a { color: #3572b0; }
.conf { height: 41px; background: #205081; border-bottom: 1px solid #2e3d54; display: flex; align-items: center; color: #fff; padding-left: 20px; }
.burger { width: 16px; height: 12px; }
.logo { width: 120px; height: 24px; margin-left: 19px; color: #fff; letter-spacing: 0; }
.logo text { font: 700 19px "Noto Sans", sans-serif; fill: #fff; }
.spaces { width: 47px; margin-left: 19px; }
.conf .tri { width: 8px; height: 4px; color: #c3d0de; }
.conf .sp { margin-left: 5px; }
.cal { width: 66px; margin-left: 28px; }
.create { width: 64px; height: 30px; margin-left: 23px; background: #3572b0; border-radius: 3px 0 0 3px; line-height: 30px; text-align: center; }
.dots { width: 37px; height: 30px; margin-left: 1px; background: #3572b0; border-radius: 0 3px 3px 0; display: grid; place-items: center; }
.dots svg { width: 16px; height: 4px; fill: #fff; }
.right { margin-left: auto; display: flex; align-items: center; padding-right: 20px; }
.quick { width: 220px; height: 30px; border-radius: 3px; background: #1b3f66; display: flex; align-items: center; justify-content: flex-end; padding-right: 10px; }
.quick svg { width: 11px; height: 11px; }
.help { width: 16px; height: 16px; margin: 0 5px 0 20px; }
.tray { width: 16px; height: 12px; margin: 0 25px 0 23px; }
.avatar { width: 24px; height: 24px; margin-right: 5px; }
.body { display: flex; height: 598px; }
.side { width: 285px; background: #f5f5f5; border-right: 1px solid #ccc; }
.scroller { display: flex; height: 543px; }
.side-content { width: 271px; flex: none; overflow: hidden; }
.space { display: flex; align-items: center; padding: 14px 10px 0 14px; }
.inq { width: 50px; height: 50px; }
.inq text { font: italic 700 23px "Open Sans", sans-serif; letter-spacing: 0; fill: #109fdc; stroke: #109fdc; stroke-width: .6px; }
.space a { margin-left: 9px; flex: 1; }
.star { width: 16px; height: 16px; }
.calrow { display: flex; align-items: center; gap: 5px; padding: 15px 0 0 20px; }
.calrow svg { width: 16px; height: 16px; }
h5 { margin: 17px 0 0 20px; height: 17px; font-size: 12px; line-height: 19px; letter-spacing: 0; color: #707070; }
.tree { list-style: none; margin: 0; padding: 0; }
.tree li { height: 30px; display: flex; align-items: center; gap: 7px; }
.tree svg { width: 10px; height: 10px; }
.l1 { padding-left: 23px; } .l2 { padding-left: 39px; } .l3 { padding-left: 55px; } .l4 { padding-left: 71px; } .l5 { padding-left: 87px; }
.hover { text-decoration: underline; }
.page .current { font-weight: 700; color: #333; }
.vbar { width: 14px; background: linear-gradient(90deg, #cfcfcf, #e2e2e2); border: 1px solid #bebbb7; border-radius: 7px; }
.vbar i { display: block; height: 198px; margin: -1px; border: 1px solid #c6c3bf; border-radius: 7px; background: linear-gradient(90deg, #fdfdfd, #ececea); }
.scroller .vbar { flex: none; width: 13px; }
.hbar { height: 14px; padding-right: 13px; background: #efefee; }
.hbar div { height: 14px; border: 1px solid #c2bfbb; border-radius: 7px; background: linear-gradient(#cfcfcf, #e2e2e2); }
.hbar i { display: block; width: 110px; height: 14px; margin: -1px; border: 1px solid #c6c3bf; border-radius: 7px; background: linear-gradient(#fdfdfd, #ececea); }
.space-tools { height: 41px; border-top: 1px solid #ccc; display: flex; align-items: center; padding: 0 13px 0 18px; color: #707070; gap: 5px; }
.space-tools svg { width: 16px; height: 16px; }
.space-tools em { margin-left: auto; font-style: normal; font-size: 18px; line-height: 16px; margin-top: -4px; }
.grip { width: 10px; padding: 0 4px; display: flex; flex-direction: column; justify-content: center; gap: 3px; }
.grip i { width: 2px; height: 2px; background: #999; }
.content { padding-left: 30px; overflow: hidden; }
table { width: 934px; border-collapse: separate; border-spacing: 0; table-layout: fixed; letter-spacing: .135px; }
th, td { height: 35px; padding: 0 10px; border-bottom: 1px solid #ccc; text-align: left; line-height: 20px; }
.c1 { width: 585px; } .c2 { width: 175px; }
.page-bar { border-color: #bebbb7; }
.page-bar i { margin-top: 91px; height: 314px; }
.status { position: absolute; left: 0; bottom: 0; width: 692px; height: 22px; padding: 0 0 0 4px; border: 1px solid #c1beba; border-left: 0; border-radius: 0 3px 0 0; background: linear-gradient(#fbfbfb, #efeeec); color: #333; font: 14.5px/20px "Noto Sans", sans-serif; }
.status span { letter-spacing: -.05px; }
```
